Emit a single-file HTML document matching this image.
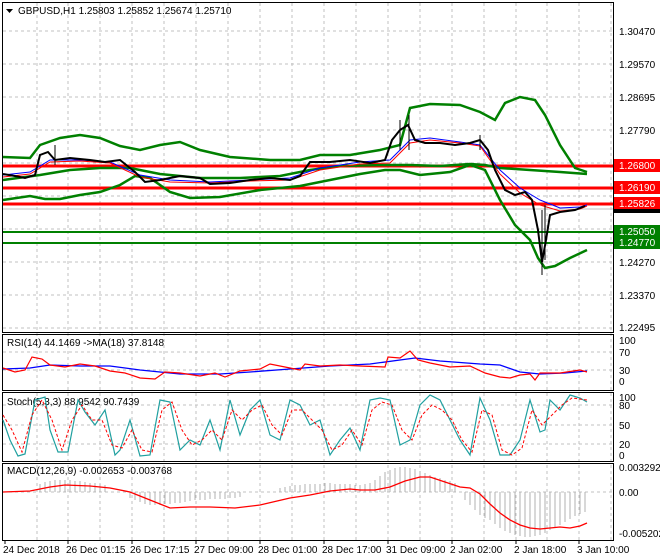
<!DOCTYPE html>
<html><head><meta charset="utf-8"><style>
html,body{margin:0;padding:0;background:#fff;width:660px;height:560px;overflow:hidden}
svg{display:block;font-family:"Liberation Sans",sans-serif;font-size:10px}
</style></head><body>
<svg width="660" height="560" viewBox="0 0 660 560">
<rect width="660" height="560" fill="#fff"/>
<g stroke="#c0c0c0" stroke-dasharray="3,3" stroke-width="1">
<path d="M37 3V540M68 3V540M100 3V540M132 3V540M164 3V540M196 3V540M228 3V540M260 3V540M292 3V540M324 3V540M356 3V540M388 3V540M420 3V540M452 3V540M484 3V540M516 3V540M547 3V540M579 3V540M611 3V540"/>
<path d="M3 31H613M3 64H613M3 97H613M3 130H613M3 163H613M3 196H613M3 229H613M3 262H613M3 295H613M3 328H613"/>
<path d="M3 352H613M3 370H613M3 405H613M3 425H613M3 444H613M3 492H613"/>
</g>
<g fill="none" stroke="#000" stroke-width="1">
<rect x="2.5" y="2.5" width="611" height="330"/>
<rect x="2.5" y="334.5" width="611" height="56"/>
<rect x="2.5" y="392.5" width="611" height="69"/>
<rect x="2.5" y="463.5" width="611" height="77"/>
</g>
<g fill="none">
<path stroke="#ff0000" stroke-width="3" d="M3 166H613M3 188H613M3 204H613"/>
<path stroke="#008000" stroke-width="2" d="M3 232H613M3 243H613"/>
<path stroke="#c0c0c0" d="M3 209H613"/>
<polyline stroke="#008000" stroke-width="2.5" points="3,157 30,158 40,145 60,138 80,135 100,138 120,146 140,150 160,145 180,142 200,150 230,157 270,160 300,160 320,155 350,155 380,150 400,145 410,108 430,104 460,105 480,112 495,120 505,103 520,97 535,100 545,115 560,145 575,168 587,172"/>
<polyline stroke="#008000" stroke-width="2.5" points="3,200 30,196 45,199 60,199 80,195 100,192 120,185 135,176 150,178 170,192 190,198 220,197 260,190 300,186 330,180 360,174 385,170 400,170 420,175 450,172 470,165 485,170 500,200 515,225 530,240 538,258 545,268 555,266 570,258 587,250"/>
<polyline stroke="#008000" stroke-width="2.5" points="3,180 40,175 70,170 100,168 130,168 160,174 200,178 240,178 280,176 310,170 340,166 380,165 410,165 440,166 470,164 485,165 500,168 530,170 560,172 587,174"/>
<polyline stroke="#0000ff" stroke-width="1" points="3,175 30,172 50,160 80,160 110,162 140,175 170,180 210,182 250,180 290,178 320,168 360,162 390,160 410,140 430,138 460,142 480,145 500,170 520,188 540,200 560,208 580,207 587,205"/>
<polyline stroke="#ff0000" stroke-width="1" points="3,177 30,174 50,162 80,161 110,163 140,177 170,182 210,183 250,181 290,180 320,170 360,164 390,163 410,143 430,140 460,143 480,146 500,174 520,193 540,205 560,211 580,209 587,206"/>
<polyline stroke="#000" stroke-width="2" points="3,174 15,176 25,178 35,175 40,155 48,152 55,160 70,158 90,160 105,162 120,160 135,172 145,182 160,180 180,176 200,178 210,184 230,183 250,180 270,178 290,180 300,176 310,162 330,162 350,160 370,163 385,160 392,140 400,130 408,125 415,140 425,143 440,143 455,145 470,143 480,140 488,150 495,170 505,190 515,195 525,192 532,200 538,230 542,262 546,240 550,215 560,212 575,210 585,206"/>
<path stroke="#000" stroke-width="1" d="M542 210V275M545 205V260M409 115V150M400 120V150M480 135V150M55 145V165"/>
</g>
<g fill="#000">
<text x="619" y="35">1.30470</text>
<text x="619" y="68">1.29570</text>
<text x="619" y="101">1.28695</text>
<text x="619" y="134">1.27790</text>
<text x="619" y="266">1.24270</text>
<text x="619" y="299">1.23370</text>
<text x="619" y="331">1.22495</text>
</g>
<rect x="614" y="159" width="46" height="13" fill="#ff0000"/>
<text x="619" y="169" fill="#fff">1.26800</text>
<rect x="614" y="181" width="46" height="13" fill="#ff0000"/>
<text x="619" y="191" fill="#fff">1.26190</text>
<rect x="614" y="206" width="46" height="7" fill="#000"/>
<rect x="614" y="197" width="46" height="12" fill="#ff0000"/>
<text x="619" y="207" fill="#fff">1.25826</text>
<rect x="614" y="225" width="46" height="13" fill="#008000"/>
<text x="619" y="235" fill="#fff">1.25050</text>
<rect x="614" y="236" width="46" height="13" fill="#008000"/>
<text x="619" y="246" fill="#fff">1.24770</text>
<path d="M6 9h7l-3.5 4z" fill="#000"/>
<text x="18" y="14" fill="#000">GBPUSD,H1  1.25803 1.25852 1.25674 1.25710</text>
<text x="7" y="346" fill="#000">RSI(14) 44.1469  -&gt;MA(18) 37.8148</text>
<g fill="#000"><text x="619" y="344">100</text><text x="619" y="356">70</text><text x="619" y="374">30</text><text x="619" y="385">0</text></g>
<polyline fill="none" stroke="#0000ff" stroke-width="1.3" points="3,369 30,368 50,365 80,366 110,366 140,370 180,374 220,374 250,372 290,369 330,366 370,364 400,360 415,358 440,361 480,364 500,365 520,372 540,374 565,373 587,371"/>
<polyline fill="none" stroke="#ff0000" stroke-width="1.2" points="3,368 15,372 25,370 32,357 42,359 50,365 65,367 80,364 95,366 110,371 125,373 140,378 155,379 165,372 180,373 200,376 215,373 225,377 240,371 260,369 270,364 290,368 300,370 305,364 320,366 340,365 360,366 385,367 388,357 400,358 410,351 418,360 430,363 450,367 470,366 485,373 500,377 510,378 520,375 530,374 535,380 540,373 560,373 580,370 587,372"/>
<text x="7" y="405" fill="#000">Stoch(5,3,3) 88.9542 90.7439</text>
<g fill="#000"><text x="619" y="401">100</text><text x="619" y="409">80</text><text x="619" y="429">50</text><text x="619" y="448">20</text><text x="619" y="459">0</text></g>
<polyline fill="none" stroke="#20a0a0" stroke-width="1.2" points="3,420 10,440 18,456 25,454 35,400 45,397 50,430 58,452 68,452 78,400 85,412 95,425 105,410 115,455 120,450 130,420 140,456 150,455 160,400 170,402 180,450 190,440 200,445 210,420 220,450 230,400 240,435 250,410 260,400 270,435 280,440 290,400 300,405 310,425 320,420 330,455 340,440 350,428 360,450 370,400 380,398 390,400 400,445 410,440 420,405 430,395 440,400 450,420 460,440 470,455 480,398 490,420 500,455 510,455 520,440 530,400 540,432 545,430 550,400 560,410 570,395 580,398 587,402"/>
<polyline fill="none" stroke="#ff0000" stroke-width="1" stroke-dasharray="3,2" points="3,415 12,430 22,452 32,415 42,400 52,420 62,450 72,420 82,405 92,420 102,420 112,445 122,448 132,430 142,450 152,452 162,410 172,402 182,430 192,445 202,440 212,430 222,440 232,410 242,420 252,410 262,405 272,425 282,435 292,410 302,410 312,420 322,430 332,450 342,445 352,430 362,445 372,410 382,402 392,405 402,430 412,440 422,415 432,405 442,410 452,420 462,440 472,452 482,410 492,415 502,450 512,455 522,448 532,410 542,425 552,415 562,405 572,398 587,400"/>
<text x="7" y="474" fill="#000">MACD(12,26,9) -0.002653 -0.003768</text>
<g fill="#000"><text x="619" y="471">0.003292</text><text x="619" y="496">0.00</text><text x="619" y="537">-0.005202</text></g>
<g stroke="#b0b0b0" stroke-width="1">
<path d="M40 492V484M45 492V482M50 492V481M55 492V480M60 492V480M65 492V480M70 492V480M75 492V481M80 492V481M85 492V482M90 492V483M95 492V483M100 492V484M105 492V485"/>
<path d="M130 492V498M135 492V500M140 492V502M145 492V504M150 492V505M155 492V505M160 492V505M165 492V504M170 492V504M175 492V503M180 492V503M185 492V502M190 492V501M195 492V500M200 492V500M205 492V500M210 492V499M215 492V499M220 492V499M225 492V499M230 492V498M235 492V498M240 492V497"/>
<path d="M280 492V488M285 492V487M290 492V486M295 492V485M300 492V485M305 492V484M310 492V484M315 492V484M320 492V484M325 492V483M330 492V483M335 492V484M340 492V484M345 492V484M350 492V484M355 492V485M360 492V485M365 492V484M370 492V483M375 492V480M380 492V476M385 492V472M390 492V470M395 492V468M400 492V467M405 492V467M410 492V468M415 492V469M420 492V471M425 492V473M430 492V475M435 492V477M440 492V478M445 492V480M450 492V481M455 492V483"/>
<path d="M465 492V500M470 492V505M475 492V510M480 492V515M485 492V518M490 492V520M495 492V524M500 492V528M505 492V531M510 492V533M515 492V535M520 492V536M525 492V537M530 492V537M535 492V536M540 492V535M545 492V533M550 492V530M555 492V528M560 492V525M565 492V522M570 492V519M575 492V516M580 492V514M585 492V512"/>
</g>
<polyline fill="none" stroke="#ff0000" stroke-width="1.3" points="3,492 30,491 50,487 65,485 90,486 110,488 130,492 150,500 170,508 190,507 210,507 235,508 260,505 290,498 310,495 330,491 350,489 360,490 375,490 390,487 405,481 420,477 430,477 445,482 460,487 470,488 480,494 490,504 500,513 510,520 520,525 530,528 540,529 550,528 560,527 570,528 580,526 587,523"/>
<g stroke="#000"><path d="M5 541v3M68 541v3M132 541v3M196 541v3M260 541v3M324 541v3M388 541v3M452 541v3M516 541v3M579 541v3"/></g>
<g fill="#000">
<text x="3" y="553">24 Dec 2018</text>
<text x="66" y="553">26 Dec 01:15</text>
<text x="130" y="553">26 Dec 17:15</text>
<text x="194" y="553">27 Dec 09:00</text>
<text x="258" y="553">28 Dec 01:00</text>
<text x="322" y="553">28 Dec 17:00</text>
<text x="386" y="553">31 Dec 09:00</text>
<text x="450" y="553">2 Jan 02:00</text>
<text x="514" y="553">2 Jan 18:00</text>
<text x="577" y="553">3 Jan 10:00</text>
</g>
</svg>
</body></html>
